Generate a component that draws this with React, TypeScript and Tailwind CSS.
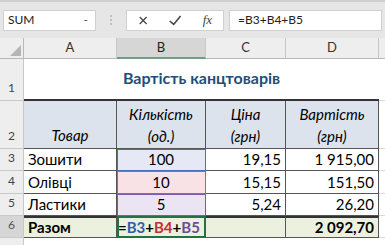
import React from 'react'

const font = { fontFamily: 'Lato, "Open Sans", sans-serif' }

function RowHead({ n, selected }: { n: string; selected?: boolean }) {
  return (
    <div
      className={`flex items-end justify-center pb-[3px] border-r border-b border-[#c8c8c8] text-[12px] ${
        selected ? 'bg-[#d6d6d6] text-[#555]' : 'bg-[#eeeeee] text-[#444]'
      }`}
    >
      {n}
    </div>
  )
}

function ColHead({ l, selected }: { l: string; selected?: boolean }) {
  return (
    <div
      className={`flex items-center justify-center border-r border-[#c8c8c8] text-[13px] ${
        selected ? 'bg-[#d6d6d6] border-b-2 border-b-[#6f9e84] text-[#222]' : 'bg-[#eeeeee] border-b border-b-[#b8b8b8] text-[#333]'
      }`}
    >
      {l}
    </div>
  )
}

export default function App() {
  const cell = 'border-r border-b border-[#555] flex items-center text-[15px] text-black'
  return (
    <div className="w-[385px] h-[245px] overflow-hidden bg-white" style={font}>
      {/* toolbar */}
      <div className="h-[38px] bg-[#e6e6e6] border-t-2 border-[#cfcfcf] flex items-center px-[3px]">
        <div className="w-[93px] h-[21px] bg-white border border-[#d0d0d0] flex items-center px-[4px] text-[12px] text-[#222]">
          <span className="flex-1">SUM</span>
          <span className="text-[#555] pr-[3px]">-</span>
        </div>
        <div className="w-[30px] flex justify-center">
          <svg width="4" height="12" viewBox="0 0 4 12">
            <circle cx="2" cy="2" r="1" fill="#b0b0b0" />
            <circle cx="2" cy="6" r="1" fill="#b0b0b0" />
            <circle cx="2" cy="10" r="1" fill="#b0b0b0" />
          </svg>
        </div>
        <div className="w-[98px] h-[21px] bg-white border border-[#d0d0d0] flex items-center text-[#333]">
          <svg width="33" height="21" viewBox="0 0 33 21">
            <path d="M13 7 L20 14 M20 7 L13 14" stroke="#444" strokeWidth="1.3" />
          </svg>
          <svg width="33" height="21" viewBox="0 0 33 21">
            <path d="M11 11 L15 14.5 L22 6" stroke="#444" strokeWidth="1.6" fill="none" />
          </svg>
          <span className="w-[32px] text-center italic text-[13px] text-[#444]" style={{ fontFamily: '"Liberation Serif", serif' }}>
            fx
          </span>
        </div>
        <div className="ml-[5px] flex-1 h-[21px] bg-white border border-[#d0d0d0] flex items-center px-[8px] text-[12px] text-[#222]">
          =B3+B4+B5
        </div>
      </div>

      {/* sheet */}
      <div className="grid grid-cols-[24px_93px_89px_80px_93px_6px] grid-rows-[21px_42px_48px_22px_23px_22px_22px_7px]">
        {/* column headers */}
        <div className="bg-[#eeeeee] border-r border-b border-[#b8b8b8] relative">
          <div className="absolute right-[2px] bottom-[2px] w-0 h-0 border-l-[11px] border-l-transparent border-b-[11px] border-b-[#b5b5b5]" />
        </div>
        <ColHead l="A" />
        <ColHead l="B" selected />
        <ColHead l="C" />
        <ColHead l="D" />
        <div className="bg-[#eeeeee] border-b border-[#b8b8b8]" />

        {/* row 1 */}
        <RowHead n="1" />
        <div className="col-span-4 flex items-center justify-center pb-[2px] border-b-2 border-[#333] text-[16px] font-bold text-[#1f4e79]">
          Вартість канцтоварів
        </div>
        <div className="border-b border-[#d9d9d9]" />

        {/* row 2 */}
        <RowHead n="2" />
        <div className={`${cell} bg-[#dde3ec] justify-center items-end pb-[2px] italic text-[#1f3864]`}>Товар</div>
        <div className={`${cell} bg-[#dde3ec] flex-col justify-center leading-[22px] italic text-[#1f3864]`}>
          <span>Кількість</span>
          <span>(од.)</span>
        </div>
        <div className={`${cell} bg-[#dde3ec] flex-col justify-center leading-[22px] italic text-[#1f3864]`}>
          <span>Ціна</span>
          <span>(грн)</span>
        </div>
        <div className={`${cell} bg-[#dde3ec] flex-col justify-center leading-[22px] italic text-[#1f3864]`}>
          <span>Вартість</span>
          <span>(грн)</span>
        </div>
        <div className="border-b border-[#d9d9d9]" />

        {/* row 3 */}
        <RowHead n="3" />
        <div className={`${cell} px-[4px]`}>Зошити</div>
        <div className={`${cell} justify-center bg-[#e6e8f6] outline outline-1 outline-[#4472c4] -outline-offset-1`}>100</div>
        <div className={`${cell} justify-end px-[4px]`}>19,15</div>
        <div className={`${cell} justify-end px-[4px]`}>1 915,00</div>
        <div className="border-b border-[#d9d9d9]" />

        {/* row 4 */}
        <RowHead n="4" />
        <div className={`${cell} px-[4px]`}>Олівці</div>
        <div className={`${cell} justify-center bg-[#f8e2e6] outline outline-1 outline-[#d9534f] -outline-offset-1`}>10</div>
        <div className={`${cell} justify-end px-[4px]`}>15,15</div>
        <div className={`${cell} justify-end px-[4px]`}>151,50</div>
        <div className="border-b border-[#d9d9d9]" />

        {/* row 5 */}
        <RowHead n="5" />
        <div className={`${cell} px-[4px]`}>Ластики</div>
        <div className={`${cell} justify-center bg-[#ebe5f3] outline outline-1 outline-[#7a5ca8] -outline-offset-1`}>5</div>
        <div className={`${cell} justify-end px-[4px]`}>5,24</div>
        <div className={`${cell} justify-end px-[4px]`}>26,20</div>
        <div className="border-b border-[#d9d9d9]" />

        {/* row 6 */}
        <RowHead n="6" selected />
        <div className={`${cell} px-[4px] bg-[#ebf1de] font-bold border-t-2 border-t-[#333]`}>Разом</div>
        <div className={`${cell} px-[1px] bg-[#ebf1de] font-bold outline outline-2 outline-[#217346] -outline-offset-2 border-t-2 border-t-[#333]`}>
          <span>=</span>
          <span className="text-[#2f5fa8]">B3</span>
          <span>+</span>
          <span className="text-[#c0303a]">B4</span>
          <span>+</span>
          <span className="text-[#6a4c9c]">B5</span>
        </div>
        <div className={`${cell} bg-[#ebf1de] border-t-2 border-t-[#333]`} />
        <div className={`${cell} justify-end px-[4px] bg-[#ebf1de] font-bold border-t-2 border-t-[#333]`}>2 092,70</div>
        <div className="border-b border-[#d9d9d9]" />

        {/* row 7 partial */}
        <div className="bg-[#eeeeee] border-r border-[#c8c8c8]" />
        <div className="col-span-5" />
      </div>
    </div>
  )
}
